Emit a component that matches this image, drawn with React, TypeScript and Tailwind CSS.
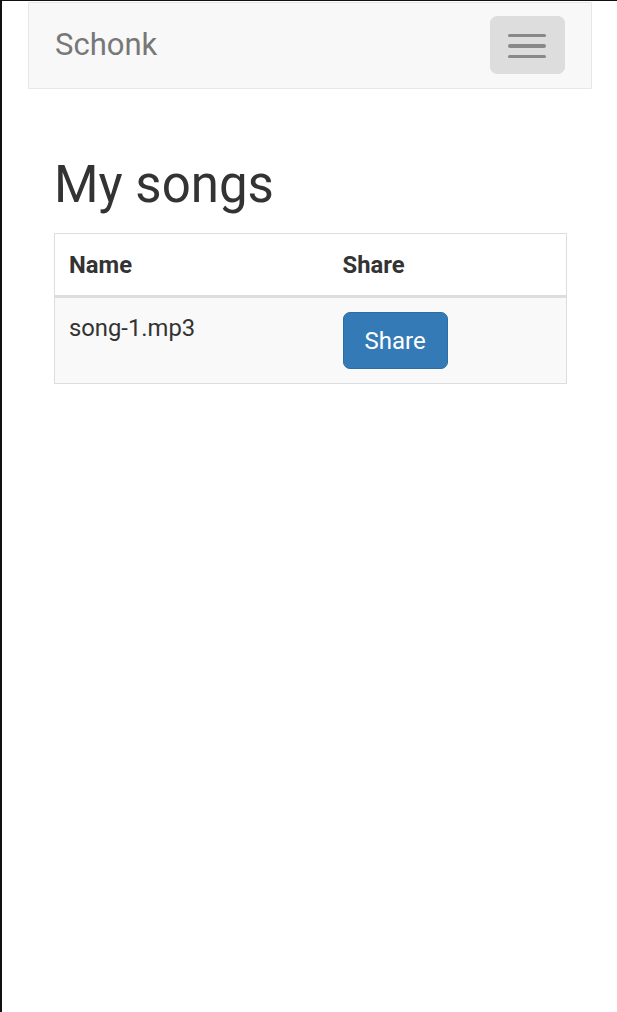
import React from "react";

export default function App() {
  const songs = ["song-1.mp3"];

  return (
    <div
      className="min-h-screen bg-white border-l-2 border-t border-[#111] text-[#333]"
      style={{ fontFamily: "Roboto, 'Liberation Sans', sans-serif" }}
    >
      <div className="pl-[26px] pr-[25px] pt-px">
        {/* navbar */}
        <nav className="flex items-start justify-between h-[87px] bg-[#f8f8f8] border border-[#e7e7e7] rounded-[1px]">
          <a className="px-[26px] py-[25px] text-[31px] leading-[34px] text-[#777]">Schonk</a>
          <button
            type="button"
            className="mt-[13px] mr-[26px] flex flex-col gap-[7px] w-[75px] h-[58px] pt-[17px] px-[17px] bg-[#ddd] border border-[#ddd] rounded-[7px]"
          >
            <span className="block h-[3.4px] w-[38px] rounded-[2px] bg-[#888]" />
            <span className="block h-[3.4px] w-[38px] rounded-[2px] bg-[#888]" />
            <span className="block h-[3.4px] w-[38px] rounded-[2px] bg-[#888]" />
          </button>
        </nav>

        <div className="pl-[26px] pr-[25px]">
          <h2 className="mt-[68px] mb-[20px] text-[51px] leading-[56px] font-normal">My songs</h2>

          <table className="w-full border border-[#ddd] border-collapse text-[23.8px] leading-[34px]">
            <thead>
              <tr>
                <th className="w-[274px] text-left font-bold px-[14px] pt-[14px] pb-[13px] border-b-[3.4px] border-[#ddd]">Name</th>
                <th className="text-left font-bold px-[14px] pt-[14px] pb-[13px] border-b-[3.4px] border-[#ddd]">Share</th>
              </tr>
            </thead>
            <tbody>
              {songs.map((song) => (
                <tr key={song} className="bg-[#f9f9f9]">
                  <td className="align-top px-[14px] pt-[13px] pb-[14px]">{song}</td>
                  <td className="align-top px-[14px] pt-[14px] pb-[14px]">
                    <button
                      type="button"
                      className="h-[57px] px-[21px] text-[24px] text-white bg-[#337ab7] border border-[#2e6da4] rounded-[7px] leading-[34px]"
                    >
                      Share
                    </button>
                  </td>
                </tr>
              ))}
            </tbody>
          </table>
        </div>
      </div>
    </div>
  );
}
